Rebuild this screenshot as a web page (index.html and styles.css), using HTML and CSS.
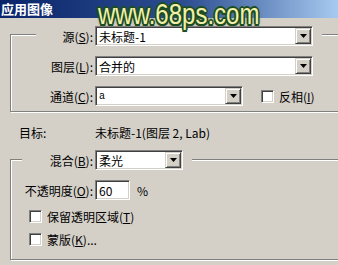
FILE: index.html
```html
<!DOCTYPE html>
<html lang="zh-CN">
<head>
  <meta charset="UTF-8" />
  <title>应用图像</title>
  <link rel="stylesheet" href="styles.css">
</head>
<body>
  <div class="titlebar">应用图像</div>
  <div class="watermark">www.68ps.com</div>

  <div class="dialog">
    <div class="group source">
      <div class="caption">
        <span class="label">源(<u>S</u>):</span>
        <div class="combo wide"><span class="value">未标题-1</span><span class="drop"><svg width="7" height="4" viewBox="0 0 7 4"><polygon points="0,0 7,0 3.5,4" fill="#000"/></svg></span></div>
      </div>
      <div class="row">
        <span class="label">图层(<u>L</u>):</span>
        <div class="combo wide"><span class="value">合并的</span><span class="drop"><svg width="7" height="4" viewBox="0 0 7 4"><polygon points="0,0 7,0 3.5,4" fill="#000"/></svg></span></div>
      </div>
      <div class="row">
        <span class="label">通道(<u>C</u>):</span>
        <div class="combo mid"><span class="value small">a</span><span class="drop"><svg width="7" height="4" viewBox="0 0 7 4"><polygon points="0,0 7,0 3.5,4" fill="#000"/></svg></span></div>
        <span class="check invert"></span>
        <span class="check-text">反相(<u>I</u>)</span>
      </div>
    </div>

    <div class="target">
      <span class="target-label">目标:</span>
      <span>未标题-1(图层 2, Lab)</span>
    </div>

    <div class="group blend">
      <div class="caption">
        <span class="label">混合(<u>B</u>):</span>
        <div class="combo narrow"><span class="value">柔光</span><span class="drop"><svg width="7" height="4" viewBox="0 0 7 4"><polygon points="0,0 7,0 3.5,4" fill="#000"/></svg></span></div>
      </div>
      <div class="row">
        <span class="label">不透明度(<u>O</u>):</span>
        <div class="field">60</div>
        <span class="unit">%</span>
      </div>
      <div class="row check-row">
        <span class="check"></span>
        <span class="check-text">保留透明区域(<u>T</u>)</span>
      </div>
      <div class="row check-row">
        <span class="check"></span>
        <span class="check-text">蒙版(<u>K</u>)...</span>
      </div>
    </div>
  </div>
</body>
</html>
```

FILE: styles.css
```css
body {
  margin: 0;
  width: 338px;
  height: 265px;
  overflow: hidden;
  position: relative;
  background: #d4d0c8;
  font-family: "Noto Sans CJK SC", "Liberation Sans", sans-serif;
  font-size: 12px;
  color: #000;
}
.titlebar {
  height: 18px;
  line-height: 18px;
  padding-left: 1px;
  background: linear-gradient(to right, #0a246a, #2d4f92 55%, #a6caf0);
  color: #fff;
  font-weight: bold;
  font-size: 13px;
}
.watermark {
  position: absolute;
  left: 98px;
  top: 0;
  font-family: "Liberation Sans", sans-serif;
  font-size: 30px;
  line-height: 28px;
  color: #f2f0ac;
  transform: scaleX(0.8);
  transform-origin: left top;
  text-shadow:
    2px 0 0 #1d4d1f, -2px 0 0 #1d4d1f, 0 2px 0 #1d4d1f, 0 -2px 0 #1d4d1f,
    1.5px 1.5px 0 #1d4d1f, -1.5px 1.5px 0 #1d4d1f, 1.5px -1.5px 0 #1d4d1f, -1.5px -1.5px 0 #1d4d1f,
    0 0 4px #2d6a30;
}
.dialog {
  padding: 16px 0 0 10px;
}
.group {
  width: 340px;
  border: 1px solid #808080;
  box-shadow: inset 1px 1px 0 #fff, 1px 1px 0 #fff;
}
.caption {
  display: flex;
  align-items: center;
  gap: 2px;
  background: #d4d0c8;
}
.source .caption {
  margin: -9px 0 0 25px;
  width: 286px;
}
.source .caption .label {
  width: 57px;
}
.blend .caption {
  margin: -10px 0 0 11px;
  width: 170px;
}
.blend .caption .label {
  width: 71px;
}
.label {
  width: 82px;
  text-align: right;
  white-space: nowrap;
}
.row {
  display: flex;
  align-items: center;
  gap: 2px;
  margin-top: 10px;
}
.source {
  padding-bottom: 5px;
}
.blend {
  margin-top: 19px;
  padding-bottom: 13px;
}
.combo, .field {
  box-sizing: border-box;
  height: 20px;
  background: #fff;
  border: 1px solid;
  border-color: #808080 #fff #fff #808080;
  box-shadow: inset 1px 1px 0 #404040, inset -1px -1px 0 #d4d0c8;
  display: flex;
  align-items: center;
  padding: 1px;
}
.combo.wide { width: 218px; }
.combo.mid { width: 148px; }
.combo.narrow { width: 88px; }
.value {
  flex: 1;
  padding-left: 2px;
  white-space: nowrap;
}
.value.small {
  font-family: "Liberation Mono", monospace;
  font-size: 10px;
}
.drop {
  box-sizing: border-box;
  width: 16px;
  height: 16px;
  background: #d4d0c8;
  border: 1px solid;
  border-color: #d4d0c8 #404040 #404040 #d4d0c8;
  box-shadow: inset 1px 1px 0 #fff, inset -1px -1px 0 #808080;
  display: flex;
  align-items: center;
  justify-content: center;
}
.drop svg {
  display: block;
}
.field {
  width: 35px;
  padding-left: 3px;
}
.unit {
  margin-left: 5px;
}
.check {
  box-sizing: border-box;
  width: 13px;
  height: 13px;
  background: #fff;
  border: 1px solid;
  border-color: #808080 #fff #fff #808080;
  box-shadow: inset 1px 1px 0 #404040, inset -1px -1px 0 #d4d0c8;
}
.check.invert {
  margin-left: 16px;
}
.check-text {
  margin-left: 3px;
  white-space: nowrap;
}
.check-row {
  height: 13px;
  padding-left: 18px;
}
.target {
  display: flex;
  height: 14px;
  line-height: 14px;
  margin: 14px 0 0 9px;
}
.target-label {
  width: 76px;
}
```
